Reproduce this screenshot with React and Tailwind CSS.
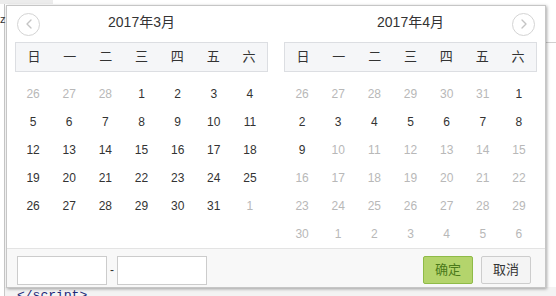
import React from 'react';
import { ChevronLeft, ChevronRight } from 'lucide-react';

const WEEK = ['日', '一', '二', '三', '四', '五', '六'];

// each cell: [label, active]
const march = [
    [[26, 0], [27, 0], [28, 0], [1, 1], [2, 1], [3, 1], [4, 1]],
    [[5, 1], [6, 1], [7, 1], [8, 1], [9, 1], [10, 1], [11, 1]],
    [[12, 1], [13, 1], [14, 1], [15, 1], [16, 1], [17, 1], [18, 1]],
    [[19, 1], [20, 1], [21, 1], [22, 1], [23, 1], [24, 1], [25, 1]],
    [[26, 1], [27, 1], [28, 1], [29, 1], [30, 1], [31, 1], [1, 0]],
];

const april = [
    [[26, 0], [27, 0], [28, 0], [29, 0], [30, 0], [31, 0], [1, 1]],
    [[2, 1], [3, 1], [4, 1], [5, 1], [6, 1], [7, 1], [8, 1]],
    [[9, 1], [10, 0], [11, 0], [12, 0], [13, 0], [14, 0], [15, 0]],
    [[16, 0], [17, 0], [18, 0], [19, 0], [20, 0], [21, 0], [22, 0]],
    [[23, 0], [24, 0], [25, 0], [26, 0], [27, 0], [28, 0], [29, 0]],
    [[30, 0], [1, 0], [2, 0], [3, 0], [4, 0], [5, 0], [6, 0]],
];

const NavButton = ({ dir }) => (
    <div className="w-[23px] h-[23px] rounded-full border border-[#d4d4d4] flex items-center justify-center text-[#c4c4c4]">
        {dir === 'prev' ? <ChevronLeft className="w-4 h-4" strokeWidth={2} /> : <ChevronRight className="w-4 h-4" strokeWidth={2} />}
    </div>
);

const Month = ({ title, weeks, side }) => (
    <div className="w-[253px]">
        {/* Title row */}
        <div className="h-[36px] flex items-center">
            <div className="w-[26px] pl-[2px]">{side === 'left' && <NavButton dir="prev" />}</div>
            <div className="flex-1 text-center text-[14px] text-[#333] -mt-[3px]">{title}</div>
            <div className="w-[26px] flex justify-end pr-[2px]">{side === 'right' && <NavButton dir="next" />}</div>
        </div>

        {/* Weekday header */}
        <div className="h-[30px] grid grid-cols-7 items-center bg-[#f5f6f8] border border-[#dcdee2] text-[13px] text-[#333]">
            {WEEK.map((d) => (
                <div key={d} className="text-center">{d}</div>
            ))}
        </div>

        {/* Days */}
        <div className="mt-[8px] h-[168px]">
            {weeks.map((row, i) => (
                <div key={i} className="h-[28px] grid grid-cols-7 items-center text-[12px]">
                    {row.map(([n, active], j) => (
                        <div key={j} className={`text-center ${active ? 'text-[#333]' : 'text-[#b8b8b8]'}`}>{n}</div>
                    ))}
                </div>
            ))}
        </div>
    </div>
);

export default function App() {
    return (
        <div className="relative w-[556px] h-[296px] overflow-hidden bg-white font-['Liberation_Sans','Noto_Sans_CJK_SC',sans-serif]">
            {/* Page behind the picker */}
            <div className="h-[4px] w-[53px] bg-[#ececec]" />
            <div className="flex h-[292px]">
                <div className="w-[5px] pt-[10px] text-[11px] leading-none text-[#333] border-r border-[#c8c8c8]">z</div>
                <div className="flex-1 flex flex-col">
                    <div className="h-[38px] flex justify-end">
                        <div className="w-[12px] mt-[38px] border-t border-[#d0d0d0]" />
                    </div>
                    <div className="flex-1" />
                    <div className="h-[9px] bg-[#f3f3f3] pl-[12px] pt-[2px] font-['Liberation_Mono',monospace] text-[13px] leading-[14px] text-[#1f2a7a]">&lt;/script&gt;</div>
                </div>
            </div>

            {/* Date range picker popup */}
            <div className="absolute left-[6px] top-[5px] w-[540px] h-[283px] bg-white border border-[#c6c6c6] shadow-[1px_1px_3px_rgba(0,0,0,0.35)] flex flex-col">
                <div className="flex-1 flex gap-[16px] px-[8px]">
                    <Month title="2017年3月" weeks={march} side="left" />
                    <Month title="2017年4月" weeks={april} side="right" />
                </div>

                {/* Footer */}
                <div className="h-[41px] border-t border-[#e3e3e3] bg-[#f8f8f8] flex items-start pl-[10px] pr-[14px] pt-[7px]">
                    <input className="w-[90px] h-[29px] bg-white border border-[#cccccc] outline-none" />
                    <span className="w-[10px] text-center text-[12px] text-[#333] leading-[29px]">-</span>
                    <input className="w-[90px] h-[29px] bg-white border border-[#cccccc] outline-none" />
                    <div className="flex-1" />
                    <button className="w-[50px] h-[28px] rounded-[2px] bg-[#b4d46c] border border-[#8fbb48] text-[13px] text-[#4b7a1a]">确定</button>
                    <button className="ml-[8px] w-[50px] h-[28px] rounded-[2px] bg-[#f4f4f4] border border-[#cdcdcd] text-[13px] text-[#333]">取消</button>
                </div>
            </div>
        </div>
    );
}
